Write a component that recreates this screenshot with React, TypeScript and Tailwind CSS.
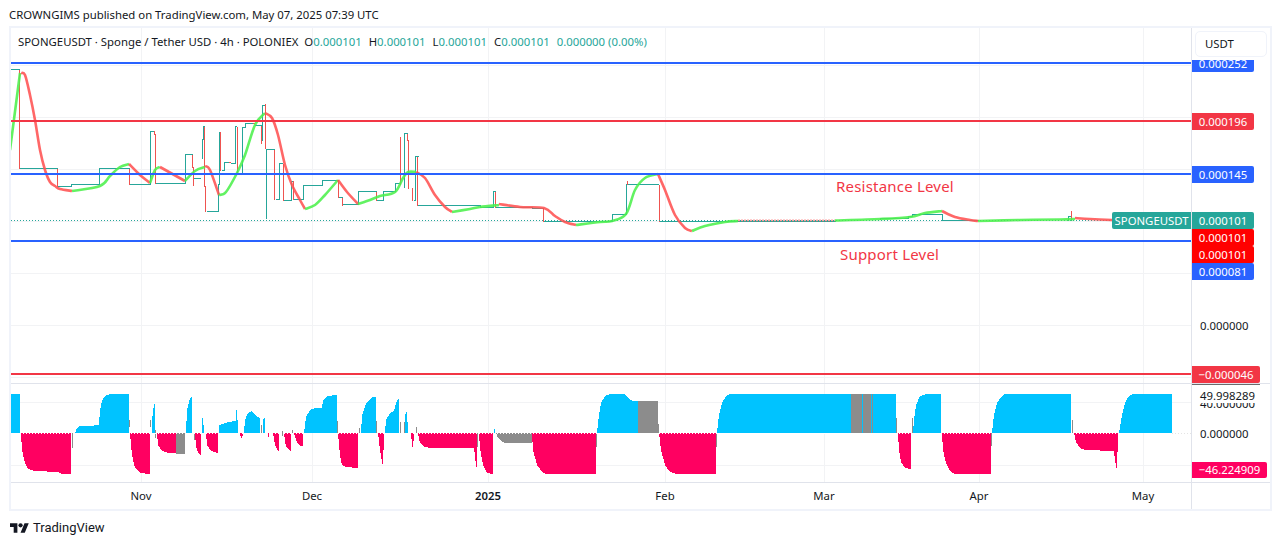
import React from 'react';

type Pt = [number, number];

const font = "font-['Noto_Sans',sans-serif]";

// step lines of the chart, in page coordinates
const tealSteps = [
  'M10 69H19', 'M19 168H57', 'M57 186H71V184H99V168H129', 'M129 184H150V130.5H154', 'M155 182.5H185V154H192',
  'M192 178H200', 'M201.5 158V139H203V126H204', 'M206 211H218V184H219V131', 'M221 170H224V162H228', 'M230 163H235V126H236',
  'M237 174H242V127H245V123H252', 'M254 125H261', 'M262 140V105H265', 'M266 218V149H274', 'M275 199H279V163H282',
  'M283 200H291V180.5H293', 'M293 199H303V185H322V180H338', 'M338 197H342', 'M342 204H358V191H376', 'M376 200H383V191H395V183H400',
  'M404 187V133H407', 'M413 200H415V156H418', 'M417 205H480V207H493V191H495', 'M495 207H532V208H543', 'M543 221H612V214H626V184H658',
  'M659 221H835', 'M880 219V218H908V216H912V214H942V220H978', 'M1068 220V216H1071V220',
];
const redSteps = [
  'M19 69V168', 'M57 168V186', 'M129 168V184', 'M154 130.5V134H155V183', 'M192 154V167H193V185', 'M204 126V186H205V211',
  'M220 131V170', 'M228 162H230', 'M237 126V174', 'M252 123H254', 'M261 125V143', 'M265 103V148', 'M274 149V199', 'M283 163V200',
  'M293 180.5V199', 'M338 180V197', 'M342 197V205', 'M376 191V200', 'M400 136V184', 'M407 133V140H408V188', 'M412 187V200',
  'M417 156V205', 'M495 191V207', 'M543 208V221', 'M627 180V184', 'M658.5 184V221', 'M1071 210V219',
];

// smoothed indicator line, one list per colour run
const curve: { up: boolean; pts: Pt[] }[] = [
  { up: true, pts: [[10, 150], [20, 73]] },
  { up: false, pts: [[21, 73], [25, 75], [30, 95], [35, 120], [40, 150], [45, 170], [50, 182], [55, 186], [60, 189], [72, 191]] },
  { up: true, pts: [[72, 191], [100, 186], [110, 176], [120, 167], [129, 164]] },
  { up: false, pts: [[129, 164], [140, 175], [150, 183]] },
  { up: true, pts: [[150, 183], [155, 170], [160, 167]] },
  { up: false, pts: [[160, 167], [185, 181]] },
  { up: true, pts: [[185, 181], [195, 171], [205, 167]] },
  { up: false, pts: [[205, 166], [210, 170], [219, 195]] },
  { up: true, pts: [[219, 195], [226, 192], [237, 173], [245, 155], [255, 125], [265, 113]] },
  { up: false, pts: [[265, 113], [272, 118], [278, 135], [285, 165], [292, 185], [300, 200], [305, 209]] },
  { up: true, pts: [[305, 209], [315, 205], [325, 195], [338, 180]] },
  { up: false, pts: [[338, 180], [347, 192], [358, 204]] },
  { up: true, pts: [[358, 204], [370, 200], [380, 196], [395, 192], [403, 178], [408, 172], [416, 172]] },
  { up: false, pts: [[416, 172], [425, 178], [435, 195], [445, 207], [452, 212]] },
  { up: true, pts: [[452, 212], [470, 209], [480, 207], [499, 205]] },
  { up: false, pts: [[499, 204], [520, 207], [544, 208], [555, 216], [565, 222], [576, 225]] },
  { up: true, pts: [[576, 225], [600, 222], [612, 221], [626, 214], [635, 190], [645, 178], [658, 174]] },
  { up: false, pts: [[658, 174], [665, 190], [675, 215], [685, 228], [692, 231]] },
  { up: true, pts: [[692, 231], [705, 226], [725, 222], [738, 221]] },
  { up: true, pts: [[835, 220.5], [880, 219], [910, 217], [925, 213], [942, 211]] },
  { up: false, pts: [[942, 211], [955, 217], [970, 220], [978, 221]] },
  { up: true, pts: [[978, 221], [1020, 220], [1060, 219.5], [1075, 219]] },
  { up: false, pts: [[1075, 218], [1090, 219], [1112, 220]] },
];

const smooth = (pts: Pt[]) => {
  let d = `M${pts[0][0]} ${pts[0][1]}`;
  for (let i = 0; i < pts.length - 1; i++) {
    const p0 = pts[i - 1] ?? pts[i];
    const p1 = pts[i];
    const p2 = pts[i + 1];
    const p3 = pts[i + 2] ?? p2;
    d += `C${p1[0] + (p2[0] - p0[0]) / 6} ${p1[1] + (p2[1] - p0[1]) / 6} ${p2[0] - (p3[0] - p1[0]) / 6} ${p2[1] - (p3[1] - p1[1]) / 6} ${p2[0]} ${p2[1]}`;
  }
  return d;
};

const BLUE = '#00c3ff';
const PINK = '#ff0061';
const GRAY = '#8c8c8c';

// oscillator areas, each closed on the zero line
const areas: [string, string][] = [
  [BLUE, '10,394 20,394 20,433 10,433'],
  [PINK, '21,433 22,450 25,463 28,469 35,471 58,472 62,474 71,474 71,433'],
  [GRAY, '72,433 72,448 73,448 73,433'],
  [BLUE, '75,433 77,428 80,426 88,426 99,425 100,410 102,401 105,396 110,394 129,394 129,433'],
  [GRAY, '129,420 130,420 130,433'],
  [PINK, '130,433 132,455 135,468 140,473 150,474 150,433'],
  [GRAY, '150,420 151,420 151,433'],
  [BLUE, '152,433 152,420 154,404 155,403 155,433'],
  [GRAY, '155,430 156,430 156,438 155,438'],
  [PINK, '157,433 158,445 162,451 168,453 176,453.5 176,433'],
  [GRAY, '176,433 176,454 185,454 185,433'],
  [BLUE, '186,433 187,410 190,398 192,397 192,433'],
  [GRAY, '194,433 194,440 195,440 195,433'],
  [PINK, '195,433 196,447 199,454 201,456 201,433'],
  [BLUE, '202,433 202,418 203,417 204,433'],
  [PINK, '206,433 207,445 211,451 218,453 218,433'],
  [BLUE, '219,433 219,425 225,423 228,422 236,421 236,410 237,410 238,430 238,433'],
  [PINK, '240,433 241,438 242,439 243,433'],
  [BLUE, '244,433 245,420 248,413 252,411 256,416 260,418 260,433'],
  [GRAY, '261,425 262,425 262,433 261,433'],
  [BLUE, '263,433 263,419 265,418 265,433'],
  [PINK, '268,433 268,437 269,437 269,433'],
  [PINK, '273,433 275,445 278,451 279,451 279,433'],
  [GRAY, '282,431 283,431 283,436 282,436'],
  [PINK, '284,433 286,447 290,451 291,451 291,433'],
  [GRAY, '292,430 293,430 293,433 292,433'],
  [PINK, '294,433 297,443 300,446 303,446 303,433'],
  [BLUE, '304,433 306,417 310,410 315,408 322,408 323,400 327,396 337,395 337,433'],
  [GRAY, '337,421 338,421 338,433 337,433'],
  [PINK, '338,433 340,455 342,465 346,467 358,468 358,433'],
  [GRAY, '359,428 360,428 360,433 359,433'],
  [BLUE, '361,433 362,415 366,404 372,397 376,397 376,433'],
  [GRAY, '376,421 377,421 377,433 376,433'],
  [PINK, '378,433 380,450 383,467 384,433'],
  [BLUE, '385,433 386,420 390,413 394,411 397,400 399,398 399,433'],
  [GRAY, '400,422 401,422 401,433 400,433'],
  [GRAY, '404,422 405,422 405,433 404,433'],
  [BLUE, '405,433 405,415 407,411 408,433'],
  [PINK, '411,433 412,445 413,449 414,433'],
  [GRAY, '416,427 417,427 417,433 416,433'],
  [PINK, '418,433 420,443 425,447 430,448 474,448 476,465 477,469 477,433'],
  [GRAY, '477,433 477,447 478,447 478,433'],
  [PINK, '479,433 480,448 483,465 487,473 493,474 493,433'],
  [BLUE, '494,429 495,429 495,433 494,433'],
  [GRAY, '496,433 498,438 502,442 506,443 532,443 532,433'],
  [PINK, '532,433 533,450 537,465 543,473 546,474 596,474 596,433'],
  [GRAY, '596,433 596,447 597,447 597,433'],
  [BLUE, '597,433 599,415 601,403 605,396 610,394 625,394 628,398 633,401 638,401 638,433'],
  [GRAY, '638,401 658,401 658,424 659,424 659,433 638,433'],
  [PINK, '659,433 661,450 665,465 670,472 676,474 716,474 716,433'],
  [GRAY, '716,433 716,447 717,447 717,433'],
  [BLUE, '717,433 719,415 722,403 726,396 730,394 851,394 851,433'],
  [GRAY, '851,394 862,394 862,433 851,433'],
  [BLUE, '862,394 863,394 863,433 862,433'],
  [GRAY, '863,394 871,394 871,433 863,433'],
  [BLUE, '871,394 872,394 872,433 871,433'],
  [GRAY, '872,394 873,394 873,433 872,433'],
  [BLUE, '873,394 896,394 896,433 873,433'],
  [GRAY, '896,418 897,418 897,433 896,433'],
  [PINK, '898,433 899,450 901,462 905,468 911,469 911,433'],
  [GRAY, '912,418 913,418 913,433 912,433'],
  [BLUE, '913,433 914,420 916,405 920,396 925,394.5 941,394 941,433'],
  [PINK, '942,433 943,450 946,463 950,471 955,474 991,474 991,433'],
  [GRAY, '991,433 991,446 992,446 992,433'],
  [BLUE, '992,433 994,415 997,403 1002,396 1005,394 1071,394 1071,433'],
  [GRAY, '1072,420 1073,420 1073,433 1072,433'],
  [PINK, '1074,433 1076,442 1080,448 1085,450 1114,451 1115,460 1117,471 1118,433'],
  [BLUE, '1119,433 1122,415 1125,403 1128,397 1133,394 1172,394 1172,433'],
];

const vGrid = [141, 312, 488, 665, 824, 979, 1143];
const hGrid = [65, 117, 169, 221, 273, 325, 377];
const hLines = [
  { y: 63, color: '#2962ff' },
  { y: 121, color: '#f23645' },
  { y: 174, color: '#2962ff' },
  { y: 241, color: '#2962ff' },
  { y: 374, color: '#f23645' },
];

const timeLabels = [
  { text: 'Nov', x: 141 },
  { text: 'Dec', x: 312 },
  { text: '2025', x: 488, bold: true },
  { text: 'Feb', x: 665 },
  { text: 'Mar', x: 824 },
  { text: 'Apr', x: 979 },
  { text: 'May', x: 1143 },
];

const Ohlc = ({ name, value }: { name: string; value: string }) => (
  <span className="mr-[7px]">
    {name}
    <span className="text-[#26a69a]">{value}</span>
  </span>
);

const Grid = ({ from, to }: { from: number; to: number }) => (
  <g stroke="#f2f3f5" strokeWidth="1">
    {vGrid.map((x) => (
      <line key={x} x1={x + 0.5} x2={x + 0.5} y1={from} y2={to} />
    ))}
  </g>
);

const PriceChart = () => (
  <svg className="block w-[1180px] h-[355px]" viewBox="11 28 1180 355">
    <Grid from={28} to={383} />
    <g stroke="#f2f3f5" strokeWidth="1">
      {hGrid.map((y) => (
        <line key={y} x1={11} x2={1191} y1={y + 0.5} y2={y + 0.5} />
      ))}
    </g>
    <path d={tealSteps.join('')} fill="none" stroke="#26a69a" strokeWidth="1" transform="translate(0.5 0.5)" shapeRendering="crispEdges" />
    <path d={redSteps.join('')} fill="none" stroke="#ef5350" strokeWidth="1" transform="translate(0.5 0.5)" shapeRendering="crispEdges" />
    <line x1={11} x2={1112} y1={220.5} y2={220.5} stroke="#26a69a" strokeWidth="1" strokeDasharray="1 2" />
    <line x1={738} x2={835} y1={220.5} y2={220.5} stroke="#ff5252" strokeOpacity="0.55" strokeWidth="2" strokeDasharray="2 1" />
    {curve.map((c, i) => (
      <path key={i} d={smooth(c.pts)} fill="none" stroke={c.up ? '#4cf04c' : '#ff5252'} strokeWidth="2.6" strokeOpacity="0.88" />
    ))}
    {hLines.map((l) => (
      <line key={l.y} x1={11} x2={1191} y1={l.y} y2={l.y} stroke={l.color} strokeWidth="2" />
    ))}
  </svg>
);

const OscChart = () => (
  <svg className="block w-[1180px] h-[98px]" viewBox="11 384 1180 98">
    <Grid from={384} to={482} />
    <g stroke="#f2f3f5" strokeWidth="1">
      <line x1={11} x2={1191} y1={402.5} y2={402.5} />
      <line x1={11} x2={1191} y1={465.5} y2={465.5} />
    </g>
    <g shapeRendering="crispEdges">
      {areas.map(([color, points], i) => (
        <polygon key={i} points={points} fill={color} />
      ))}
    </g>
    <line x1={11} x2={1191} y1={433.5} y2={433.5} stroke="#e4e4e4" strokeWidth="1" strokeDasharray="1 2" />
    <line x1={11} x2={1172} y1={433.5} y2={433.5} stroke="#ffffff" strokeWidth="1" strokeDasharray="1 2" />
  </svg>
);

const TvLogo = () => (
  <svg viewBox="0 0 36 28" className="w-[19px] h-[15px]" fill="#131722">
    <path d="M14 22H7V11H0V4h14v18zM28 22h-8l7.5-18h8L28 22z" />
    <circle cx="20" cy="8" r="4" />
  </svg>
);

const tag = 'w-[62px] h-[17px] leading-[17px] text-center text-white rounded-r-[2px]';

export default function App() {
  return (
    <div className={`w-[1281px] h-[545px] bg-white text-[#131722] text-[11.35px] overflow-hidden ${font}`}>
      <div className="h-[26px] pl-[9px] pt-[6px] leading-[18px]">
        CROWNGIMS published on TradingView.com, May 07, 2025 07:39 UTC
      </div>

      <div className="ml-[9px] w-[1263px] h-[485px] border-2 border-[#f0f3fa] flex flex-col">
        {/* price pane */}
        <div className="flex h-[355px]">
          <div className="relative w-[1180px]">
            <PriceChart />
            <div className="absolute left-[7px] top-[5px] leading-[18px] whitespace-nowrap">
              <span className="mr-[6px]">SPONGEUSDT · Sponge / Tether USD · 4h · POLONIEX</span>
              <Ohlc name="O" value="0.000101" />
              <Ohlc name="H" value="0.000101" />
              <Ohlc name="L" value="0.000101" />
              <Ohlc name="C" value="0.000101" />
              <span className="text-[#26a69a]">0.000000 (0.00%)</span>
            </div>
            <span className="absolute left-[825px] top-[147px] text-[15px] leading-[22px] tracking-[0.2px] text-[#f23645]">Resistance Level</span>
            <span className="absolute left-[829px] top-[215px] text-[15px] leading-[22px] tracking-[0.2px] text-[#f23645]">Support Level</span>
            <span className="absolute left-[1101px] top-[184px] h-[17px] w-[79px] rounded-l-[2px] bg-[#26a69a] text-white leading-[17px] text-center">SPONGEUSDT</span>
          </div>
          <div className="relative w-[79px] border-l border-[#e0e3eb]">
            <span className="absolute left-[8px] top-[82px] leading-[16px]">0.000200</span>
            <span className="absolute left-[8px] top-[134px] leading-[16px]">0.000150</span>
            <span className={`absolute left-0 top-[27px] ${tag} bg-[#2962ff]`}>0.000252</span>
            <span className={`absolute left-0 top-[85px] ${tag} bg-[#f23645]`}>0.000196</span>
            <span className={`absolute left-0 top-[138px] ${tag} bg-[#2962ff]`}>0.000145</span>
            {/* last price tags stack on each other */}
            <div className="absolute left-0 top-[184px] flex flex-col">
              <span className={`${tag} bg-[#26a69a]`}>0.000101</span>
              <span className={`${tag} bg-[#ff0000]`}>0.000101</span>
              <span className={`${tag} bg-[#ff0000]`}>0.000101</span>
              <span className={`${tag} bg-[#2962ff]`}>0.000081</span>
            </div>
            <span className="absolute left-[8px] top-[290px] leading-[16px]">0.000000</span>
            <span className="absolute left-0 top-[338px] w-[68px] h-[17px] leading-[17px] text-center text-white rounded-r-[2px] bg-[#f23645]">−0.000046</span>
            {/* white margin round the currency button hides the top of the first tag */}
            <div className="absolute left-0 top-0 w-[78px] h-[32px] bg-white pl-[3px] pt-[3px]">
              <div className="w-[72px] h-[26px] pl-[9px] leading-[24px] border border-[#f0f3fa] rounded-[5px]">USDT</div>
            </div>
          </div>
        </div>

        {/* oscillator pane */}
        <div className="flex h-[99px] border-t border-[#e0e3eb]">
          <div className="w-[1180px]">
            <OscChart />
          </div>
          <div className="relative w-[79px] border-l border-[#e0e3eb] overflow-hidden">
            <div className="absolute left-0 top-0 h-px w-[68px] bg-[#6b6b6b]" />
            <span className="absolute left-[8px] top-[12px] leading-[16px]">40.000000</span>
            <span className="absolute left-0 top-[4px] w-[78px] h-[15px] pl-[8px] leading-[15px] bg-white">49.998289</span>
            <span className="absolute left-[8px] top-[42px] leading-[16px]">0.000000</span>
            <span className="absolute left-[8px] top-[74px] leading-[16px]">−40.000000</span>
            <span className="absolute left-0 top-[78px] w-[75px] h-[16px] leading-[16px] text-center text-white rounded-r-[2px] bg-[#ff0061]">−46.224909</span>
          </div>
        </div>

        {/* time axis */}
        <div className="flex flex-1 border-t border-[#e0e3eb]">
          <div className="relative w-[1180px]">
            {timeLabels.map((t) => (
              <span
                key={t.text}
                className={`absolute top-[4px] leading-[18px] -translate-x-1/2 ${t.bold ? 'font-semibold' : ''}`}
                style={{ left: t.x - 11 }}
              >
                {t.text}
              </span>
            ))}
          </div>
          <div className="w-[79px] border-l border-[#e0e3eb]" />
        </div>
      </div>

      <div className="flex items-center h-[20px] mt-[7px] ml-[10px] gap-[4px]">
        <TvLogo />
        <span className="font-['Roboto',sans-serif] text-[13px] leading-[20px]">TradingView</span>
      </div>
    </div>
  );
}
